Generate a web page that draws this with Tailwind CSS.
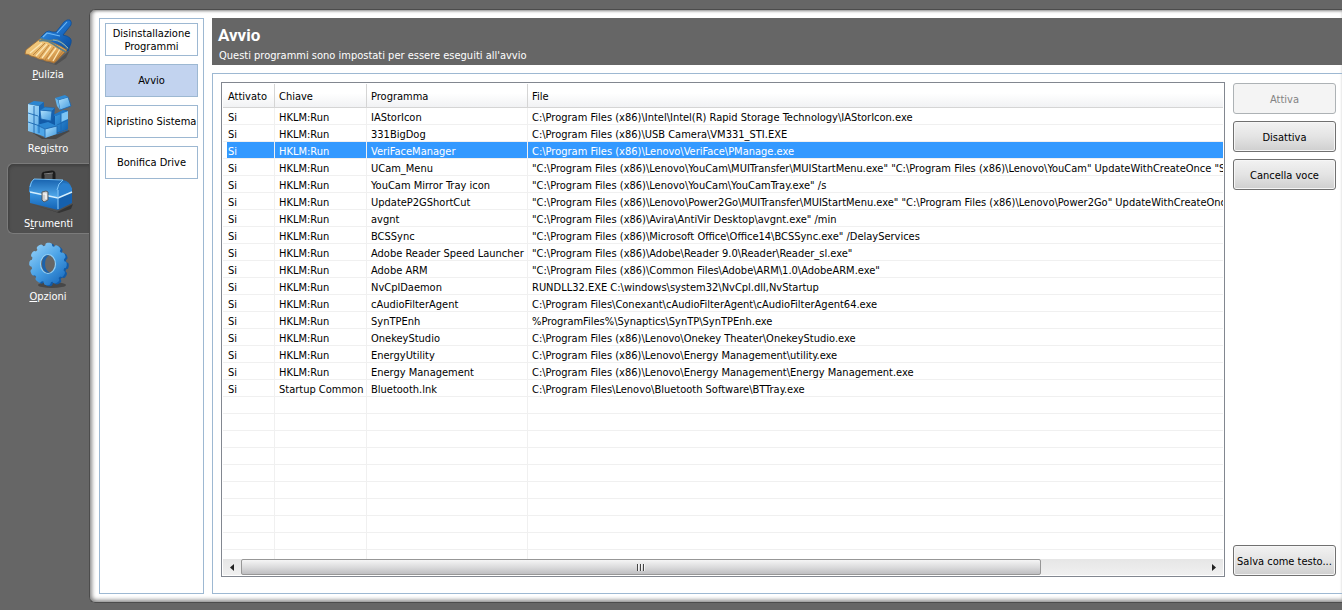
<!DOCTYPE html>
<html lang="it">
<head>
<meta charset="utf-8">
<meta name="viewport" content="width=device-width, initial-scale=1">
<title>Strumenti - Avvio</title>
<script src="https://cdn.jsdelivr.net/npm/@tailwindcss/browser@4"></script>
</head>
<body class="flex h-screen min-h-[480px] overflow-hidden bg-[#666] pt-[9px] pb-[7px] font-['DejaVu_Sans_Condensed','Noto_Sans',sans-serif] text-[11px] leading-[13px] text-black">

<!-- Main sections -->
<nav class="w-[89px] shrink-0 pt-1 pl-[7px] text-white" aria-label="Sezioni">
  <a href="#pulizia" class="flex h-[75px] flex-col items-center pt-[5px]">
    <svg class="h-[50px] w-14" viewBox="0 0 56 50" aria-hidden="true">
      <defs>
        <linearGradient id="handle" x1="0" y1="0" x2="1" y2="1"><stop offset="0" stop-color="#3f9be8"/><stop offset=".5" stop-color="#1c6fc8"/><stop offset="1" stop-color="#0b4a97"/></linearGradient>
        <linearGradient id="bristle" x1="0" y1="0" x2="1" y2="1"><stop offset="0" stop-color="#f8d98f"/><stop offset=".6" stop-color="#e2aa5c"/><stop offset="1" stop-color="#a86a28"/></linearGradient>
      </defs>
      <path d="M10 40 34 46 50 32 46 40 36 47Z" fill="#000" opacity=".2"/>
      <path d="M20 20 26 14Q29 12 32 14L36 14 44 4Q47 1 50 2Q52 4 51 7L43 17Q48 18 50 20Q52 22 51 25L48 33Z" fill="url(#handle)" stroke="#0d4c96" stroke-width=".8"/>
      <path d="M37 15 47 4M23 19 27 15 40 18" stroke="#6fb9f6" stroke-width="1.1" fill="none"/>
      <path d="M20 21Q12 27 6 32L5 36Q9 36 11 38Q16 39 19 41Q23 41 26 43Q30 43 34 45Q38 42 41 38L47 32Q35 24 20 21Z" fill="url(#bristle)" stroke="#a36d30" stroke-width=".8"/>
      <path d="M22 25 10 35M27 26 16 38M31 28 22 40M36 30 28 41M40 31 33 43" stroke="#fbe6b4" stroke-width="1.3"/>
      <path d="M25 25 13 37M29 27 19 40M34 29 25 42M43 33 36 42" stroke="#b07a3a" stroke-width=".8"/>
      <path d="M20 20Q27 24 33 22T48 31M19 23Q26 21 33 26T46 34" stroke="#5d8088" stroke-width="1.6" fill="none"/>
      <path d="M33 22Q42 23 48 30" stroke="#9fc3cc" stroke-width=".7" fill="none"/>
    </svg>
    <span><u>P</u>ulizia</span>
  </a>
  <a href="#registro" class="flex h-[75px] flex-col items-center pt-1">
    <svg class="h-[50px] w-14" viewBox="0 0 56 50" aria-hidden="true">
      <defs>
        <linearGradient id="cube" x1="0" y1="0" x2="1" y2="1"><stop offset="0" stop-color="#b4e2fc"/><stop offset="1" stop-color="#3f99e0"/></linearGradient>
        <linearGradient id="side" x1="0" y1="0" x2="1" y2="1"><stop offset="0" stop-color="#3f9ce2"/><stop offset="1" stop-color="#0f5fae"/></linearGradient>
      </defs>
      <path d="M8 38 25 46 48 38 50 39 36 47H22Z" fill="#000" opacity=".3"/>
      <!-- Left wall -->
      <path d="M8 12 19 14V23L26 25V45L8 39Z" fill="url(#cube)"/>
      <path d="M8 12 14 9 24 10 19 14Z" fill="#2b86d1"/>
      <path d="M19 14 24 10V22L19 24Z" fill="#1766b4"/>
      <!-- Hollow and right wall -->
      <path d="M19 23 24 20 36 22 46 18 48 19V37L26 45V34L19 32Z" fill="#125ba8"/>
      <path d="M35 24 48 19V37L35 41Z" fill="url(#side)"/>
      <path d="M41 21 48 19V27L41 30Z" fill="#7cc4f4"/>
      <path d="M31 24 43 18 48 19 36 24Z" fill="#2179c8"/>
      <!-- Front cube -->
      <path d="M17 33 28 30 37 34 25 37Z" fill="#2b86d1"/>
      <path d="M17 33 25 37V45L17 41Z" fill="#4ea6e8"/>
      <path d="M25 37 37 34V42L25 46Z" fill="url(#cube)"/>
      <path d="M8 21 18 24M8 30 17 33 25 37V46M14 14V41M19 24V41M37 34V42L48 38M37 33 48 28M41 22V40M25 37 37 34" stroke="#1b66b0" stroke-width=".9" fill="none"/>
      <!-- Loose cubes -->
      <path d="M20 18 32 19 31 29 21 27Z" fill="url(#cube)" stroke="#1b65ae" stroke-width=".8"/>
      <path d="M20 18 25 15 35 16 32 19Z" fill="#2d88d2" stroke="#1b65ae" stroke-width=".6"/>
      <path d="M32 19 35 16 34 25 31 29Z" fill="#1760ac"/>
      <path d="M38 8 48 5 51 14 40 18Z" fill="url(#cube)" stroke="#1b65ae" stroke-width=".8"/>
      <path d="M35 6 45 3 48 5 38 8Z" fill="#2f8ad4"/>
      <path d="M35 6 38 8 40 18 37 14Z" fill="#67b7ee"/>
    </svg>
    <span>Re<u>g</u>istro</span>
  </a>
  <a href="#strumenti" aria-current="page" class="flex h-[71px] flex-col items-center rounded-l-md border border-r-0 border-[#7b7b7b] bg-[#505050] pt-[3px] shadow-[inset_1px_2px_3px_#404040]">
    <svg class="h-[50px] w-14" viewBox="0 0 56 50" aria-hidden="true">
      <defs>
        <linearGradient id="lid" x1="0" y1="0" x2="0" y2="1"><stop offset="0" stop-color="#1762ae"/><stop offset="1" stop-color="#55aef0"/></linearGradient>
        <linearGradient id="box" x1="0" y1="0" x2="0" y2="1"><stop offset="0" stop-color="#3c98e4"/><stop offset="1" stop-color="#1463b4"/></linearGradient>
      </defs>
      <path d="M10 37 36 45 52 37 50 42 38 46Z" fill="#000" opacity=".35"/>
      <path d="M22 15V8Q22 6 24 6L31 5Q33 5 33 7V14" fill="none" stroke="#1d1d1d" stroke-width="3"/>
      <path d="M23 7 32 6" stroke="#9a9a9a" stroke-width=".8"/>
      <path d="M8 24Q8 15 13 12L42 13Q49 14 51 22V25L37 31 8 25Z" fill="url(#lid)"/>
      <path d="M37 31Q35 22 42 16Q49 16 51 22V25Z" fill="#2a80d0"/>
      <path d="M9 20Q10 14 13 12L42 13Q37 16 36 23" fill="none" stroke="#7cc3f7" stroke-width="1"/>
      <path d="M9 25 37 31V43L9 36Z" fill="url(#box)"/>
      <path d="M37 31 51 26V36L37 43Z" fill="#1560ae"/>
      <path d="M9 25 37 31 51 25" fill="none" stroke="#d5efff" stroke-width="1.5"/>
      <path d="M37 23V42" stroke="#8dccfa" stroke-width="1"/>
      <path d="M21 25 25 24 27 25V33L23 35 21 33Z" fill="#cfcfcf" stroke="#4c5258" stroke-width=".9"/>
      <path d="M22 27H25V32" fill="none" stroke="#fff" stroke-width="1.2"/>
    </svg>
    <span>S<u>t</u>rumenti</span>
  </a>
  <a href="#opzioni" class="flex h-[75px] flex-col items-center pt-[6px]">
    <svg class="h-[50px] w-14" viewBox="0 0 56 50" aria-hidden="true">
      <defs><linearGradient id="gear" gradientUnits="userSpaceOnUse" x1="10" y1="4" x2="44" y2="44"><stop offset="0" stop-color="#9bd5fa"/><stop offset=".5" stop-color="#4aa2e6"/><stop offset="1" stop-color="#1667bb"/></linearGradient></defs>
      <ellipse cx="32" cy="45" rx="14" ry="3" fill="#000" opacity=".3"/>
      <g fill="none" stroke="#125aa6" transform="translate(2 1)">
        <ellipse cx="28" cy="24" rx="12" ry="14" stroke-width="9"/>
        <ellipse cx="28" cy="24" rx="16" ry="18.500" stroke-width="5.500" stroke-linecap="round" pathLength="96" stroke-dasharray="1.400 6.600"/>
      </g>
      <g fill="none" stroke="url(#gear)">
        <ellipse cx="28" cy="24" rx="12" ry="14" stroke-width="9"/>
        <ellipse cx="28" cy="24" rx="16" ry="18.500" stroke-width="5.500" stroke-linecap="round" pathLength="96" stroke-dasharray="1.400 6.600"/>
      </g>
      <ellipse cx="28" cy="24" rx="7.500" ry="9.500" fill="#666" stroke="#8fd0fa" stroke-width="1.200"/>
      <path d="M30 33Q22 33 22 24T29 15Q25 18 25 24T30 33Z" fill="#1b62ab"/>
    </svg>
    <span><u>O</u>pzioni</span>
  </a>
</nav>

<!-- Content panel -->
<div class="flex min-w-0 flex-1 gap-2 rounded-l-md border border-r-0 border-[#4c4c4c] bg-white pt-2 pb-2 pl-[9px] shadow-[inset_4px_0_4px_-2px_#8c8c8c,inset_0_3px_3px_-2px_#8c8c8c,inset_0_-4px_4px_-2px_#8c8c8c]">
  <nav class="flex w-[105px] shrink-0 flex-col gap-2 border border-[#9db8d2] p-[5px] pt-1 text-center" aria-label="Strumenti">
    <button type="button" class="h-[33px] border border-[#9db8d2]">Disinstallazione<br>Programmi</button>
    <button type="button" class="h-[33px] border border-[#9db8d2] bg-[#c2d3ef]" aria-current="page">Avvio</button>
    <button type="button" class="h-[33px] border border-[#9db8d2] whitespace-nowrap">Ripristino Sistema</button>
    <button type="button" class="h-[33px] border border-[#9db8d2]">Bonifica Drive</button>
  </nav>

  <main class="flex min-w-0 flex-1 flex-col gap-2">
    <header class="h-[47px] shrink-0 bg-[#666] pt-[6px] pl-[6px] text-white">
      <h1 class="font-[Roboto] text-[17px] leading-[22px] font-bold">Avvio</h1>
      <p class="pt-[3px] pl-px">Questi programmi sono impostati per essere eseguiti all'avvio</p>
    </header>

    <section class="flex min-h-0 flex-1 gap-2 border border-r-0 border-[#9db8d2] pt-2 pr-[6px] pb-4 pl-2">
      <div class="flex min-w-0 flex-1 flex-col border border-[#828790] p-px">
        <div class="min-h-0 flex-1 overflow-hidden">
          <table class="w-full table-fixed border-separate border-spacing-0 text-left whitespace-nowrap [&_td]:h-[17px] [&_td]:overflow-hidden [&_td]:border-r [&_td]:border-b [&_td]:border-[#f0f0f0] [&_td]:pt-0.5 [&_td]:pr-0 [&_td]:pb-0 [&_td]:pl-1 [&_td:first-child]:pl-[5px] [&_td:last-child]:border-r-0 [&_th]:h-6 [&_th]:border-r [&_th]:border-b [&_th]:border-[#d5d5d5] [&_th]:bg-linear-to-b [&_th]:from-white [&_th]:from-40% [&_th]:to-[#f1f2f4] [&_th]:p-0 [&_th]:pt-0.5 [&_th]:pl-1 [&_th]:font-normal [&_th:first-child]:pl-[5px] [&_th:last-child]:border-r-0">
            <colgroup><col class="w-[52px]"><col class="w-[92px]"><col class="w-[161px]"><col></colgroup>
            <thead><tr><th scope="col">Attivato</th><th scope="col">Chiave</th><th scope="col">Programma</th><th scope="col">File</th></tr></thead>
            <tbody>
              <tr><td>Si</td><td>HKLM:Run</td><td>IAStorIcon</td><td>C:\Program Files (x86)\Intel\Intel(R) Rapid Storage Technology\IAStorIcon.exe</td></tr>
              <tr><td>Si</td><td>HKLM:Run</td><td>331BigDog</td><td>C:\Program Files (x86)\USB Camera\VM331_STI.EXE</td></tr>
              <tr aria-selected="true" class="text-white [&_td]:bg-[#3399ff] [&_td:first-child]:bg-linear-to-r [&_td:first-child]:from-white [&_td:first-child]:from-[4px] [&_td:first-child]:to-[#3399ff] [&_td:first-child]:to-[4px]"><td>Si</td><td>HKLM:Run</td><td>VeriFaceManager</td><td>C:\Program Files (x86)\Lenovo\VeriFace\PManage.exe</td></tr>
              <tr><td>Si</td><td>HKLM:Run</td><td>UCam_Menu</td><td>"C:\Program Files (x86)\Lenovo\YouCam\MUITransfer\MUIStartMenu.exe" "C:\Program Files (x86)\Lenovo\YouCam" UpdateWithCreateOnce "So</td></tr>
              <tr><td>Si</td><td>HKLM:Run</td><td>YouCam Mirror Tray icon</td><td>"C:\Program Files (x86)\Lenovo\YouCam\YouCamTray.exe" /s</td></tr>
              <tr><td>Si</td><td>HKLM:Run</td><td>UpdateP2GShortCut</td><td>"C:\Program Files (x86)\Lenovo\Power2Go\MUITransfer\MUIStartMenu.exe" "C:\Program Files (x86)\Lenovo\Power2Go" UpdateWithCreateOnc</td></tr>
              <tr><td>Si</td><td>HKLM:Run</td><td>avgnt</td><td>"C:\Program Files (x86)\Avira\AntiVir Desktop\avgnt.exe" /min</td></tr>
              <tr><td>Si</td><td>HKLM:Run</td><td>BCSSync</td><td>"C:\Program Files (x86)\Microsoft Office\Office14\BCSSync.exe" /DelayServices</td></tr>
              <tr><td>Si</td><td>HKLM:Run</td><td>Adobe Reader Speed Launcher</td><td>"C:\Program Files (x86)\Adobe\Reader 9.0\Reader\Reader_sl.exe"</td></tr>
              <tr><td>Si</td><td>HKLM:Run</td><td>Adobe ARM</td><td>"C:\Program Files (x86)\Common Files\Adobe\ARM\1.0\AdobeARM.exe"</td></tr>
              <tr><td>Si</td><td>HKLM:Run</td><td>NvCplDaemon</td><td>RUNDLL32.EXE C:\windows\system32\NvCpl.dll,NvStartup</td></tr>
              <tr><td>Si</td><td>HKLM:Run</td><td>cAudioFilterAgent</td><td>C:\Program Files\Conexant\cAudioFilterAgent\cAudioFilterAgent64.exe</td></tr>
              <tr><td>Si</td><td>HKLM:Run</td><td>SynTPEnh</td><td>%ProgramFiles%\Synaptics\SynTP\SynTPEnh.exe</td></tr>
              <tr><td>Si</td><td>HKLM:Run</td><td>OnekeyStudio</td><td>C:\Program Files (x86)\Lenovo\Onekey Theater\OnekeyStudio.exe</td></tr>
              <tr><td>Si</td><td>HKLM:Run</td><td>EnergyUtility</td><td>C:\Program Files (x86)\Lenovo\Energy Management\utility.exe</td></tr>
              <tr><td>Si</td><td>HKLM:Run</td><td>Energy Management</td><td>C:\Program Files (x86)\Lenovo\Energy Management\Energy Management.exe</td></tr>
              <tr><td>Si</td><td>Startup Common</td><td>Bluetooth.lnk</td><td>C:\Program Files\Lenovo\Bluetooth Software\BTTray.exe</td></tr>
              <tr><td></td><td></td><td></td><td></td></tr>
              <tr><td></td><td></td><td></td><td></td></tr>
              <tr><td></td><td></td><td></td><td></td></tr>
              <tr><td></td><td></td><td></td><td></td></tr>
              <tr><td></td><td></td><td></td><td></td></tr>
              <tr><td></td><td></td><td></td><td></td></tr>
              <tr><td></td><td></td><td></td><td></td></tr>
              <tr><td></td><td></td><td></td><td></td></tr>
              <tr><td></td><td></td><td></td><td></td></tr>
              <tr><td></td><td></td><td></td><td></td></tr>
            </tbody>
          </table>
        </div>
        <!-- Horizontal scrollbar -->
        <div class="flex h-4 shrink-0 items-stretch bg-linear-to-b from-[#e6e6e6] to-[#f0f0f0]">
          <button type="button" aria-label="Scorri a sinistra" class="flex w-[18px] shrink-0 items-center justify-center"><svg class="h-[7px] w-1" viewBox="0 0 4 7" aria-hidden="true"><path d="M4 0V7L0 3.500Z" fill="#222"/></svg></button>
          <div class="flex min-w-0 flex-1">
            <div class="flex w-[83%] items-center justify-center gap-px rounded-xs border border-[#979797] bg-linear-to-b from-[#f5f5f5] via-[#dcdcdd] to-[#bfbfc2]">
              <i class="h-[7px] w-0.5 border-l border-[#444] bg-white/70"></i><i class="h-[7px] w-0.5 border-l border-[#444] bg-white/70"></i><i class="h-[7px] w-0.5 border-l border-[#444] bg-white/70"></i>
            </div>
          </div>
          <button type="button" aria-label="Scorri a destra" class="flex w-[18px] shrink-0 items-center justify-center"><svg class="h-[7px] w-1" viewBox="0 0 4 7" aria-hidden="true"><path d="M0 0V7L4 3.500Z" fill="#222"/></svg></button>
        </div>
      </div>

      <div class="flex w-[103px] shrink-0 flex-col gap-[7px] py-px whitespace-nowrap">
        <button type="button" disabled class="h-[31px] rounded-[3px] border border-[#adb2b5] bg-[#f4f4f4] pt-px text-[#838383]">Attiva</button>
        <button type="button" class="h-[31px] rounded-[3px] border border-[#707070] bg-linear-to-b from-[#f2f2f2] from-0% via-[#e4e4e4] via-50% to-[#cfcfcf] pt-px shadow-[inset_0_0_0_1px_#f6f6f6]">Disattiva</button>
        <button type="button" class="h-[31px] rounded-[3px] border border-[#707070] bg-linear-to-b from-[#f2f2f2] from-0% via-[#e4e4e4] via-50% to-[#cfcfcf] pt-px shadow-[inset_0_0_0_1px_#f6f6f6]">Cancella voce</button>
        <button type="button" class="mt-auto h-[31px] rounded-[3px] border border-[#707070] bg-linear-to-b from-[#f2f2f2] from-0% via-[#e4e4e4] via-50% to-[#cfcfcf] pt-px shadow-[inset_0_0_0_1px_#f6f6f6]">Salva come testo...</button>
      </div>
    </section>
  </main>
</div>
</body>
</html>
